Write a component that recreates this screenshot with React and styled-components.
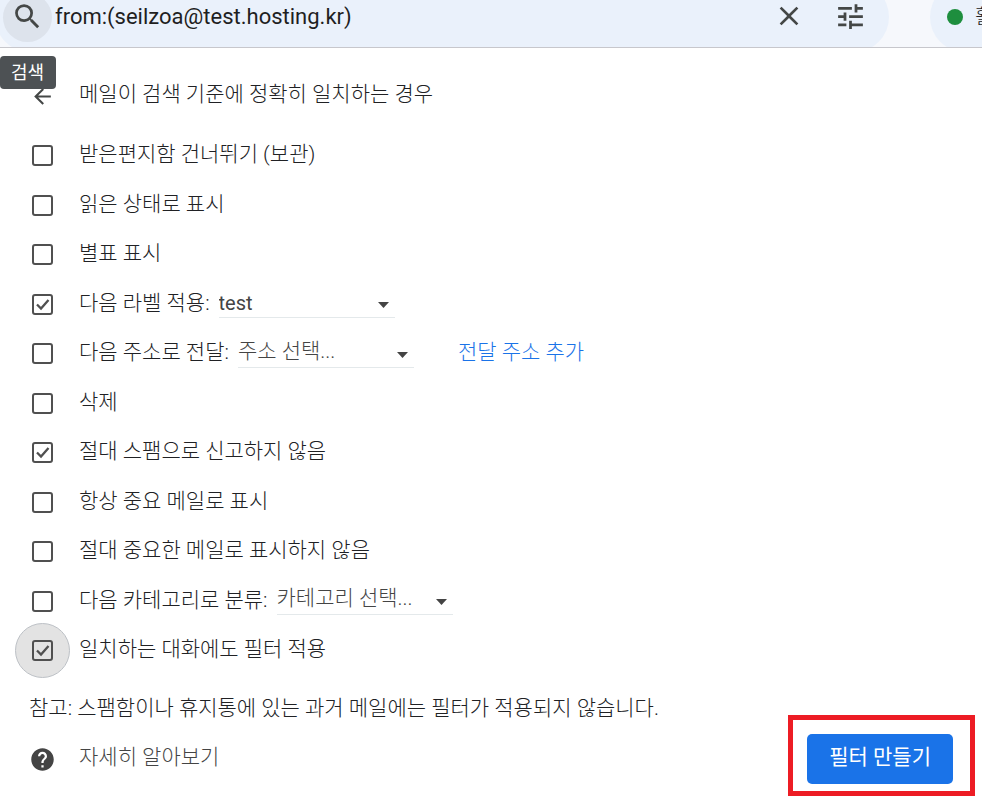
import React from 'react';
import styled, { createGlobalStyle } from 'styled-components';
import { MdSearch, MdClose, MdTune, MdArrowBack, MdHelp } from 'react-icons/md';

const GlobalStyle = createGlobalStyle`
  *, *::before, *::after {
    box-sizing: border-box;
  }

  body {
    margin: 0;
    background: #fff;
    color: #202124;
    font-family: Roboto, 'Noto Sans CJK KR', sans-serif;
    font-size: 21px;
    font-weight: 300;
    line-height: 28px;
  }

  button, input, select {
    font: inherit;
    color: inherit;
  }
`;

const TopBar = styled.header`
  display: flex;
  align-items: flex-end;
  gap: 41px;
  height: 48px;
  overflow: hidden;
  background: #f6f8fc;
  border-bottom: 1px solid #c7c7cc;
`;

const SearchForm = styled.form`
  flex: 1;
  display: flex;
  align-items: center;
  height: 70px;
  margin: 0 0 -5px -5px;
  padding: 0 2px 0 8px;
  border-radius: 35px;
  background: #eaf1fb;
`;

const IconButton = styled.button`
  display: grid;
  place-items: center;
  flex: none;
  width: ${({ $size }) => $size}px;
  height: ${({ $size }) => $size}px;
  padding: 0 0 2px;
  border: 0;
  border-radius: 50%;
  background: ${({ $active }) => ($active ? '#dde3ec' : 'transparent')};
  color: #444746;
  cursor: pointer;
`;

const SearchInput = styled.input`
  flex: 1;
  min-width: 0;
  padding: 0 0 0 3px;
  border: 0;
  outline: 0;
  background: transparent;
  color: #1f1f1f;
  font-size: 22px;
  font-weight: 400;
`;

const Status = styled.button`
  display: flex;
  align-items: center;
  gap: 12px;
  flex: none;
  width: 52px;
  height: 70px;
  margin-bottom: -5px;
  padding: 0 0 0 17px;
  border: 0;
  border-radius: 35px 0 0 35px;
  background: #eaf1fb;
  font-size: 20px;
  white-space: nowrap;
`;

const StatusDot = styled.span`
  flex: none;
  width: 16px;
  height: 16px;
  border-radius: 50%;
  background: #1e8e3e;
`;

const Tooltip = styled.div`
  position: absolute;
  top: 56px;
  left: 0;
  z-index: 1;
  padding: 3px 12px 2px 11px;
  border-radius: 4px;
  background: #4d5154;
  color: #fff;
  font-size: 18px;
  font-weight: 400;
`;

const Panel = styled.main`
  padding-top: 23px;
`;

const Heading = styled.div`
  display: flex;
  align-items: center;
  gap: 24px;
  height: 50px;
  margin-bottom: 10px;
  padding-left: 30px;
`;

const Title = styled.h1`
  margin: 0 0 5px;
  font-size: 21px;
  font-weight: 300;
`;

const Options = styled.ul`
  margin: 0;
  padding: 0;
  list-style: none;
`;

const Option = styled.li`
  display: flex;
  align-items: center;
  height: 49px;
  padding-left: 32px;

  &:nth-child(even) {
    height: 50px;
  }
`;

const CheckWrap = styled.span`
  position: relative;
  display: grid;
  flex: none;
  margin-right: 26px;

  &::before {
    content: '';
    display: ${({ $focused }) => ($focused ? 'block' : 'none')};
    position: absolute;
    inset: -17px;
    border: 1px solid #bdc1c6;
    border-radius: 50%;
    background: #e3e3e3;
  }

  svg {
    position: absolute;
    inset: 0;
    visibility: hidden;
    pointer-events: none;
  }

  input:checked + svg {
    visibility: visible;
  }
`;

const Checkbox = styled.input`
  position: relative;
  appearance: none;
  width: 21px;
  height: 21px;
  margin: 0;
  border: 2px solid #505050;
  border-radius: 3px;
  cursor: pointer;
`;

const Label = styled.label`
  margin-bottom: 3px;
`;

const SelectWrap = styled.span`
  display: grid;
  align-items: center;
  width: 176px;
  margin: 0 0 3px 9px;
  border-bottom: 1px solid #e4e9eb;

  > * {
    grid-area: 1 / 1;
  }

  svg {
    justify-self: end;
    margin: 6px 6px 0 0;
    pointer-events: none;
  }
`;

const Select = styled.select`
  appearance: none;
  width: 100%;
  padding: ${({ $latin }) => ($latin ? '2px 0 0' : '0 0 2px')};
  border: 0;
  outline: 0;
  background: transparent;
  color: #444;
  font-size: ${({ $latin }) => ($latin ? 20 : 21)}px;
  font-weight: ${({ $latin }) => ($latin ? 400 : 300)};
`;

const AddLink = styled.a`
  margin: 0 0 3px 44px;
  color: #1a73e8;
  text-decoration: none;
`;

const Footer = styled.footer`
  display: flex;
  align-items: flex-start;
  justify-content: space-between;
  padding: 9px 7px 8px 29px;
`;

const Note = styled.p`
  margin: 0;
  padding: 10px 0 12px;
`;

const Help = styled.a`
  display: flex;
  align-items: center;
  gap: 23px;
  height: 50px;
  color: #444;
  text-decoration: none;

  span {
    margin-bottom: 4px;
  }
`;

const Highlight = styled.div`
  flex: none;
  margin-top: 31px;
  padding: 14px 17px 7px 14px;
  border: 5px solid #ed1c24;
`;

const SubmitButton = styled.button`
  display: block;
  height: 50px;
  padding: 0 22px 4px;
  border: 0;
  border-radius: 5px;
  background: #1a73e8;
  color: #fff;
  font-weight: 400;
  cursor: pointer;
`;

const options = [
  { id: 'archive', text: '받은편지함 건너뛰기 (보관)' },
  { id: 'read', text: '읽은 상태로 표시' },
  { id: 'star', text: '별표 표시' },
  { id: 'label', text: '다음 라벨 적용:', checked: true, select: 'test', latin: true },
  { id: 'forward', text: '다음 주소로 전달:', select: '주소 선택...', link: '전달 주소 추가' },
  { id: 'delete', text: '삭제' },
  { id: 'nospam', text: '절대 스팸으로 신고하지 않음', checked: true },
  { id: 'important', text: '항상 중요 메일로 표시' },
  { id: 'unimportant', text: '절대 중요한 메일로 표시하지 않음' },
  { id: 'category', text: '다음 카테고리로 분류:', select: '카테고리 선택...' },
  { id: 'apply', text: '일치하는 대화에도 필터 적용', checked: true, focused: true },
];

const FilterOption = ({ id, text, checked, focused, select, latin, link }) => (
  <Option>
    <CheckWrap $focused={focused}>
      <Checkbox type="checkbox" id={id} defaultChecked={checked} />
      <svg width="21" height="21" viewBox="0 0 21 21" fill="none" stroke="#505050" strokeWidth="2.300">
        <path d="M5 10.500l4 4 7.500-8.500" />
      </svg>
    </CheckWrap>
    <Label htmlFor={id}>{text}</Label>
    {select && (
      <SelectWrap>
        <Select aria-label={text} $latin={latin}>
          <option>{select}</option>
        </Select>
        <svg width="11" height="6" viewBox="0 0 11 6">
          <path d="M0 0h11L5.500 6z" fill="#444" />
        </svg>
      </SelectWrap>
    )}
    {link && <AddLink href="#forwarding">{link}</AddLink>}
  </Option>
);

const App = () => (
  <>
    <GlobalStyle />
    <TopBar>
      <SearchForm role="search">
        <IconButton type="button" $size={49} $active aria-label="검색">
          <MdSearch size={33} />
        </IconButton>
        <SearchInput aria-label="메일 검색" defaultValue="from:(seilzoa@test.hosting.kr)" />
        <IconButton type="button" $size={48} aria-label="검색어 지우기">
          <MdClose size={32} />
        </IconButton>
        <IconButton type="button" $size={74} aria-label="검색 옵션 표시">
          <MdTune size={33} />
        </IconButton>
      </SearchForm>
      <Status type="button">
        <StatusDot />
        활성
      </Status>
    </TopBar>
    <Tooltip role="tooltip">검색</Tooltip>
    <Panel>
      <Heading>
        <IconButton type="button" $size={25} aria-label="뒤로">
          <MdArrowBack size={25} />
        </IconButton>
        <Title>메일이 검색 기준에 정확히 일치하는 경우</Title>
      </Heading>
      <Options>
        {options.map((option) => (
          <FilterOption key={option.id} {...option} />
        ))}
      </Options>
      <Footer>
        <div>
          <Note>참고: 스팸함이나 휴지통에 있는 과거 메일에는 필터가 적용되지 않습니다.</Note>
          <Help href="#help">
            <MdHelp size={27} />
            <span>자세히 알아보기</span>
          </Help>
        </div>
        <Highlight>
          <SubmitButton type="button">필터 만들기</SubmitButton>
        </Highlight>
      </Footer>
    </Panel>
  </>
);

export default App;
